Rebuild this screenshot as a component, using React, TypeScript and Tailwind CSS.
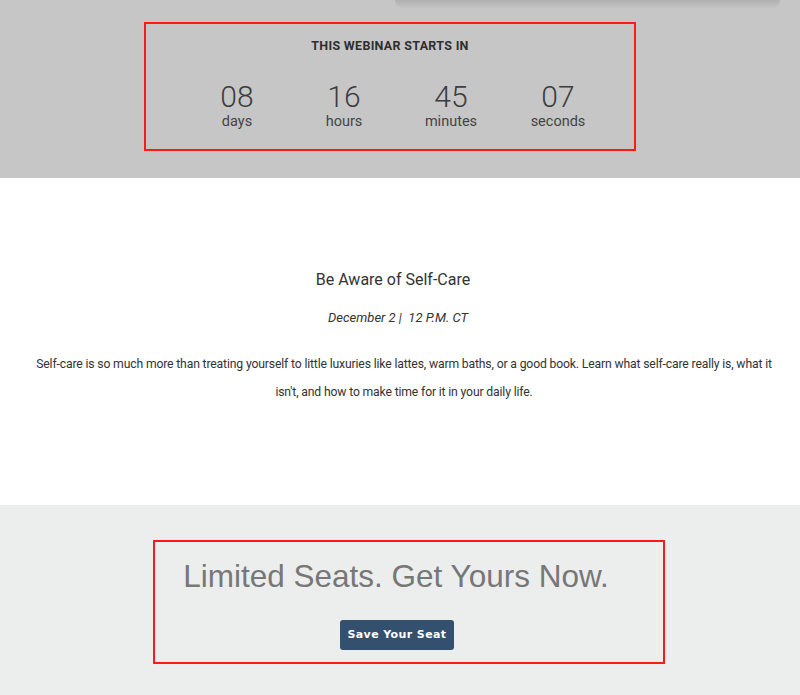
const units = [
  { value: '08', label: 'days' },
  { value: '16', label: 'hours' },
  { value: '45', label: 'minutes' },
  { value: '07', label: 'seconds' },
]

function Countdown() {
  return (
    <section className="bg-[#c6c6c6] h-[178px] flex flex-col">
      <div className="h-[9px] ml-[395px] w-[385px] bg-gradient-to-b from-[#b0b0b0] to-[#c6c6c6] rounded-b-[60px]" />
      <div className="mt-[13px] ml-[144px] w-[492px] h-[129px] border-2 border-[#ff1a1a] flex flex-col items-center">
        <h3 className="mt-[13px] text-[12.5px] font-bold tracking-[0.3px] text-[#2f2f2f]">THIS WEBINAR STARTS IN</h3>
        <div className="mt-[25px] ml-[15px] grid grid-cols-4 w-[428px]">
          {units.map(u => (
            <div key={u.label} className="flex flex-col items-center">
              <span className="text-[30px] leading-[32px] font-light text-[#3d3d3d]">{u.value}</span>
              <span className="text-[14.5px] leading-[18px] text-[#444]">{u.label}</span>
            </div>
          ))}
        </div>
      </div>
    </section>
  )
}

function Details() {
  return (
    <section className="bg-white h-[327px] flex flex-col items-center text-[#333]">
      <h2 className="mt-[90px] -ml-[14px] text-[16px] leading-[24px]">Be Aware of Self-Care</h2>
      <p className="mt-[16px] ml-[-4px] text-[13px] italic">December 2 |&nbsp; 12 P.M. CT</p>
      <p className="mt-[22px] ml-[8px] w-[740px] text-center text-[12.2px] leading-[28px] tracking-[-0.15px]">
        Self-care is so much more than treating yourself to little luxuries like lattes, warm baths, or a good book. Learn what self-care really is, what it isn't, and how to make time for it in your daily life.
      </p>
    </section>
  )
}

function Cta() {
  return (
    <section className="bg-[#eceeed] h-[190px] flex flex-col">
      <div className="mt-[35px] ml-[153px] w-[512px] h-[124px] border-2 border-[#ff1a1a] flex flex-col items-center">
        <h2 className="mt-[16px] -ml-[26px] text-[31.5px] leading-[36px] text-[#777] font-['Liberation_Sans',Arial,sans-serif]">Limited Seats. Get Yours Now.</h2>
        <button className="mt-[26px] -ml-[24px] w-[114px] h-[30px] rounded-[3px] bg-[#33506f] text-white text-[11px] font-bold tracking-[0.4px] font-['DejaVu_Sans',sans-serif]">
          Save Your Seat
        </button>
      </div>
    </section>
  )
}

export default function App() {
  return (
    <div className="w-[800px] h-[695px] overflow-hidden font-['Roboto',sans-serif]">
      <Countdown />
      <Details />
      <Cta />
    </div>
  )
}
